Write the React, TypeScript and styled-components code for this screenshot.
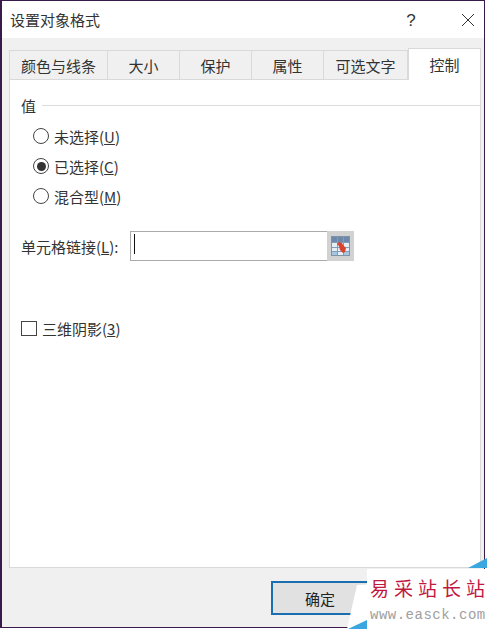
import { createGlobalStyle } from "styled-components";
import styled from "styled-components";

const Global = createGlobalStyle`
  html, body {
    margin: 0;
    padding: 0;
    background: #fff;
  }
  body {
    font-family: "Noto Sans CJK SC", "Liberation Sans", sans-serif;
    color: #333;
  }
`;

const Page = styled.div`
  position: relative;
  width: 487px;
  height: 629px;
  overflow: hidden;
`;
const Dialog = styled.div`
  box-sizing: border-box;
  width: 485px;
  height: 628px;
  display: flex;
  flex-direction: column;
  background: #f0f0f0;
  border: 1px solid #3a1a4a;
  border-left-width: 2px;
`;
const TitleBar = styled.div`
  box-sizing: border-box;
  height: 37px;
  display: flex;
  align-items: center;
  background: #fff;
  padding: 1px 7px 0 8px;
  font-size: 15px;
  flex-shrink: 0;
`;
const Title = styled.div`
  flex: 1;
  margin-top: -2px;
`;
const Help = styled.div`
  width: 20px;
  margin: 1px 38px 0 0;
  text-align: center;
  font-family: "Liberation Sans", sans-serif;
  font-size: 17px;
`;
const Close = styled.div`
  width: 18px;
  height: 16px;
  display: flex;
  align-items: center;
  justify-content: center;
`;
const TabRow = styled.div`
  height: 42px;
  display: flex;
  align-items: flex-end;
  padding-left: 7px;
  flex-shrink: 0;
`;
const Tab = styled.div<{ $w: number; $active?: boolean }>`
  box-sizing: border-box;
  width: ${(p) => p.$w}px;
  height: ${(p) => (p.$active ? 32 : 30)}px;
  display: flex;
  align-items: center;
  justify-content: center;
  font-size: 15px;
  background: ${(p) => (p.$active ? "#fff" : "#f0f0f0")};
  border: 1px solid #d9d9d9;
  border-left-width: ${(p) => (p.$active ? 1 : 0)}px;
  border-bottom: ${(p) => (p.$active ? "none" : "1px solid #d9d9d9")};
  &:first-child {
    border-left-width: 1px;
  }
`;
const Panel = styled.div`
  box-sizing: border-box;
  width: 472px;
  height: 488px;
  margin-left: 7px;
  padding: 14px 0 0 11px;
  background: #fff;
  border: 1px solid #d9d9d9;
  border-top: none;
  flex-shrink: 0;
`;
const GroupHead = styled.div`
  height: 22px;
  display: flex;
  align-items: center;
  gap: 6px;
  font-size: 15px;
`;
const GroupLine = styled.div`
  flex: 1;
  height: 1px;
  background: #dcdcdc;
`;
const RadioList = styled.div`
  display: flex;
  flex-direction: column;
  gap: 8px;
  margin-top: 9px;
  padding-left: 12px;
`;
const Option = styled.label`
  height: 22px;
  display: flex;
  align-items: center;
  gap: 5px;
  font-size: 15px;
`;
const Radio = styled.span<{ $on?: boolean }>`
  box-sizing: border-box;
  width: 16px;
  height: 16px;
  border: 1px solid #444;
  border-radius: 50%;
  display: flex;
  align-items: center;
  justify-content: center;
  background: #fff;
  &::after {
    content: "";
    display: ${(p) => (p.$on ? "block" : "none")};
    width: 9px;
    height: 9px;
    border-radius: 50%;
    background: #333;
  }
`;
const LinkRow = styled.div`
  display: flex;
  align-items: center;
  margin-top: 24px;
  height: 30px;
`;
const LinkLabel = styled.div`
  width: 109px;
  font-size: 15px;
`;
const LinkInput = styled.div`
  box-sizing: border-box;
  width: 197px;
  height: 30px;
  border: 1px solid #ababab;
  border-right: none;
  padding: 2px 0 0 3px;
`;
const Caret = styled.div`
  width: 1px;
  height: 20px;
  background: #111;
`;
const PickButton = styled.div`
  box-sizing: border-box;
  width: 27px;
  height: 30px;
  background: #d2d2d2;
  display: flex;
  align-items: center;
  justify-content: center;
`;
const CheckRow = styled.label`
  display: flex;
  align-items: center;
  gap: 5px;
  margin-top: 56px;
  height: 22px;
  font-size: 15px;
`;
const Check = styled.span`
  box-sizing: border-box;
  width: 16px;
  height: 15px;
  border: 1px solid #444;
  background: #fff;
`;
const Footer = styled.div`
  flex: 1;
  display: flex;
  padding: 13px 0 0 269px;
`;
const OkButton = styled.div`
  box-sizing: border-box;
  width: 98px;
  height: 34px;
  display: flex;
  align-items: center;
  justify-content: center;
  font-size: 15px;
  color: #222;
  background: #e1e1e1;
  border: 2px solid #1a6fb0;
`;
const Watermark = styled.div`
  position: absolute;
  right: 0;
  bottom: 0;
  width: 140px;
  height: 74px;
`;
const WatermarkBg = styled.svg`
  position: absolute;
  inset: 0;
`;
const WatermarkName = styled.div`
  position: absolute;
  left: 23px;
  top: 21px;
  white-space: nowrap;
  font-size: 19px;
  line-height: 24px;
  color: #c2183f;
  font-family: "Noto Sans CJK SC", serif;
`;
const WatermarkSpaced = styled.span`
  letter-spacing: 5px;
`;
const WatermarkUrl = styled.div`
  position: absolute;
  left: 23px;
  top: 52px;
  white-space: nowrap;
  font-family: "Liberation Mono", monospace;
  font-size: 14px;
  line-height: 16px;
  letter-spacing: 0.5px;
  color: #a0a0a0;
`;

const CellPickerIcon = () => (
  <svg width="19" height="24" viewBox="0 0 19 24">
    <rect x="0.5" y="2.5" width="18" height="19" fill="#e6edf4" stroke="#7f93a8" />
    <rect x="1" y="3" width="17" height="5" fill="#6d88a8" />
    <path d="M6.5 3v18M12.5 3v18M1 8.5h17M1 13.5h17M1 17.5h17" stroke="#7f9dbd" />
    <path d="M13 18h5v3h-5zM1 18h5v3H1z" fill="#a6c6e2" />
    <path d="M8 8l3 1 1 2 3 3-1 4-2 1-3-3-1-4-2-2z" fill="#d8432b" />
  </svg>
);

const App = () => {
  return (
    <Page>
      <Global />
      <Dialog>
        <TitleBar>
          <Title>设置对象格式</Title>
          <Help>?</Help>
          <Close>
            <svg width="14" height="14" viewBox="0 0 14 14">
              <path d="M1 1l12 12M13 1L1 13" stroke="#333" strokeWidth="1" fill="none" />
            </svg>
          </Close>
        </TitleBar>
        <TabRow>
          <Tab $w={99}>颜色与线条</Tab>
          <Tab $w={72}>大小</Tab>
          <Tab $w={72}>保护</Tab>
          <Tab $w={72}>属性</Tab>
          <Tab $w={84}>可选文字</Tab>
          <Tab $w={73} $active>
            控制
          </Tab>
        </TabRow>
        <Panel>
          <GroupHead>
            值
            <GroupLine />
          </GroupHead>
          <RadioList>
            <Option>
              <Radio />
              <span>未选择(<u>U</u>)</span>
            </Option>
            <Option>
              <Radio $on />
              <span>已选择(<u>C</u>)</span>
            </Option>
            <Option>
              <Radio />
              <span>混合型(<u>M</u>)</span>
            </Option>
          </RadioList>
          <LinkRow>
            <LinkLabel>单元格链接(<u>L</u>):</LinkLabel>
            <LinkInput>
              <Caret />
            </LinkInput>
            <PickButton>
              <CellPickerIcon />
            </PickButton>
          </LinkRow>
          <CheckRow>
            <Check />
            <span>三维阴影(<u>3</u>)</span>
          </CheckRow>
        </Panel>
        <Footer>
          <OkButton>确定</OkButton>
        </Footer>
      </Dialog>
      <Watermark>
        <WatermarkBg width="140" height="74" viewBox="0 0 140 74">
          <path d="M20 14V29.500L10 30L0 74H140V14z" fill="#fff" />
          <path d="M1 74L20 65V74z" fill="#3aa7e0" />
          <path d="M121 13L140 3V13z" fill="#3aa7e0" />
        </WatermarkBg>
        <WatermarkName>
          <WatermarkSpaced>易采站长</WatermarkSpaced>站
        </WatermarkName>
        <WatermarkUrl>www.easck.com</WatermarkUrl>
      </Watermark>
    </Page>
  );
};

export default App;
